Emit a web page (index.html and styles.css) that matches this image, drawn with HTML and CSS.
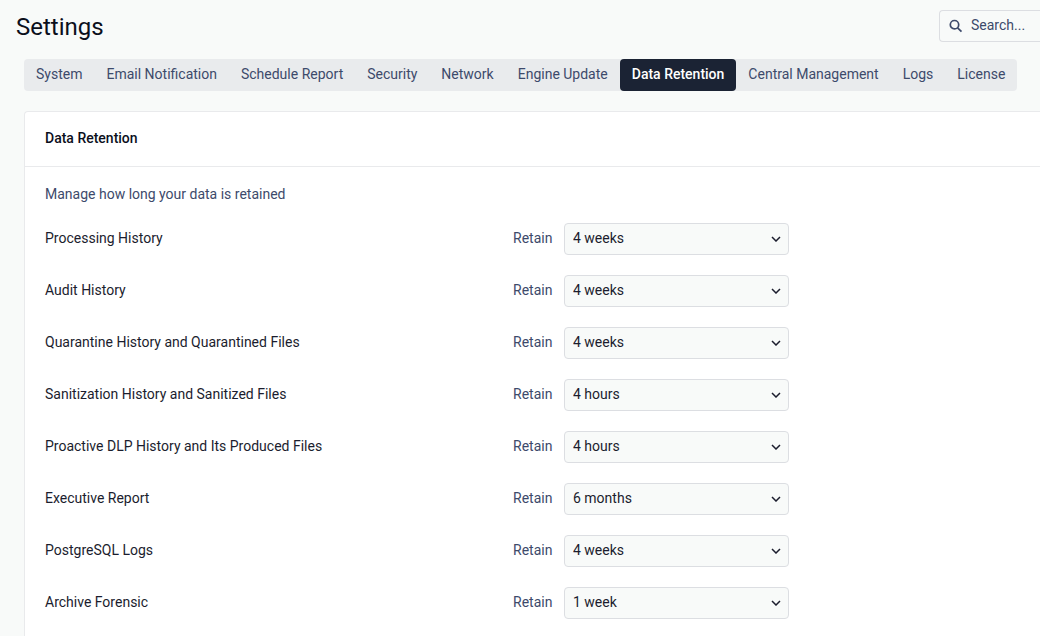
FILE: index.html
```html
<!DOCTYPE html>
<html lang="en">
	<head>
		<meta charset="utf-8">
		<meta name="viewport" content="width=device-width,initial-scale=1.0">
		<title>Settings</title>
		<link rel="stylesheet" href="styles.css">
	</head>
	<body>
		<header class="header">
			<h1 class="title">Settings</h1>
			<label class="search">
				<svg class="search-icon" viewBox="0 0 14 14" aria-hidden="true"><circle cx="5.5" cy="5.7" r="4.2"/><path d="M8.6 8.8L12.5 12.7"/></svg>
				<input class="search-input" type="text" placeholder="Search..." aria-label="Search">
			</label>
		</header>
		<nav class="tabs">
			<a class="tab" href="#">System</a>
			<a class="tab" href="#">Email Notification</a>
			<a class="tab" href="#">Schedule Report</a>
			<a class="tab" href="#">Security</a>
			<a class="tab" href="#">Network</a>
			<a class="tab" href="#">Engine Update</a>
			<a class="tab active" href="#">Data Retention</a>
			<a class="tab" href="#">Central Management</a>
			<a class="tab" href="#">Logs</a>
			<a class="tab" href="#">License</a>
		</nav>
		<main class="card">
			<h2 class="card-title">Data Retention</h2>
			<form class="card-body">
				<p class="hint">Manage how long your data is retained</p>
				<div class="row">
					<label class="name" for="processing">Processing History</label>
					<span class="retain">Retain</span>
					<div class="select">
						<select id="processing"><option>4 hours</option><option>1 week</option><option selected>4 weeks</option><option>6 months</option></select>
						<svg class="arrow" viewBox="0 0 10 6" aria-hidden="true"><path d="M1 1L5 5L9 1"/></svg>
					</div>
				</div>
				<div class="row">
					<label class="name" for="audit">Audit History</label>
					<span class="retain">Retain</span>
					<div class="select">
						<select id="audit"><option>4 hours</option><option>1 week</option><option selected>4 weeks</option><option>6 months</option></select>
						<svg class="arrow" viewBox="0 0 10 6" aria-hidden="true"><path d="M1 1L5 5L9 1"/></svg>
					</div>
				</div>
				<div class="row">
					<label class="name" for="quarantine">Quarantine History and Quarantined Files</label>
					<span class="retain">Retain</span>
					<div class="select">
						<select id="quarantine"><option>4 hours</option><option>1 week</option><option selected>4 weeks</option><option>6 months</option></select>
						<svg class="arrow" viewBox="0 0 10 6" aria-hidden="true"><path d="M1 1L5 5L9 1"/></svg>
					</div>
				</div>
				<div class="row">
					<label class="name" for="sanitization">Sanitization History and Sanitized Files</label>
					<span class="retain">Retain</span>
					<div class="select">
						<select id="sanitization"><option selected>4 hours</option><option>1 week</option><option>4 weeks</option><option>6 months</option></select>
						<svg class="arrow" viewBox="0 0 10 6" aria-hidden="true"><path d="M1 1L5 5L9 1"/></svg>
					</div>
				</div>
				<div class="row">
					<label class="name" for="dlp">Proactive DLP History and Its Produced Files</label>
					<span class="retain">Retain</span>
					<div class="select">
						<select id="dlp"><option selected>4 hours</option><option>1 week</option><option>4 weeks</option><option>6 months</option></select>
						<svg class="arrow" viewBox="0 0 10 6" aria-hidden="true"><path d="M1 1L5 5L9 1"/></svg>
					</div>
				</div>
				<div class="row">
					<label class="name" for="executive">Executive Report</label>
					<span class="retain">Retain</span>
					<div class="select">
						<select id="executive"><option>4 hours</option><option>1 week</option><option>4 weeks</option><option selected>6 months</option></select>
						<svg class="arrow" viewBox="0 0 10 6" aria-hidden="true"><path d="M1 1L5 5L9 1"/></svg>
					</div>
				</div>
				<div class="row">
					<label class="name" for="postgresql">PostgreSQL Logs</label>
					<span class="retain">Retain</span>
					<div class="select">
						<select id="postgresql"><option>4 hours</option><option>1 week</option><option selected>4 weeks</option><option>6 months</option></select>
						<svg class="arrow" viewBox="0 0 10 6" aria-hidden="true"><path d="M1 1L5 5L9 1"/></svg>
					</div>
				</div>
				<div class="row">
					<label class="name" for="forensic">Archive Forensic</label>
					<span class="retain">Retain</span>
					<div class="select">
						<select id="forensic"><option>4 hours</option><option selected>1 week</option><option>4 weeks</option><option>6 months</option></select>
						<svg class="arrow" viewBox="0 0 10 6" aria-hidden="true"><path d="M1 1L5 5L9 1"/></svg>
					</div>
				</div>
			</form>
		</main>
	</body>
</html>
```
FILE: styles.css
```css
*{
	margin: 0;
	padding: 0;
	box-sizing: border-box;
}
body{
	min-height: 100vh;
	display: flex;
	flex-direction: column;
	background-color: #f8faf9;
	color: #1b1d2e;
	font: 14px/20px Roboto, "Liberation Sans", sans-serif;
}
.header{
	display: flex;
	align-items: flex-start;
	justify-content: space-between;
	padding: 10px 0 0 16px;
}
.title{
	padding-top: 1px;
	font-size: 24px;
	line-height: 32px;
	font-weight: 400;
	color: #0b0f1c;
}
.search{
	width: 101px;
	height: 32px;
	display: flex;
	align-items: center;
	gap: 8px;
	padding-left: 9px;
	border: 1px solid #dcdee2;
	border-right: 0;
	border-radius: 4px 0 0 4px;
}
.search-icon{
	width: 14px;
	height: 14px;
	flex: none;
	fill: none;
	stroke: #3d4a6b;
	stroke-width: 1.7;
}
.search-input{
	min-width: 0;
	flex: 1;
	padding-bottom: 2px;
	border: 0;
	outline: 0;
	background: none;
	font: inherit;
	color: #3d4a6b;
}
.search-input::placeholder{
	color: #3d4a6b;
}
.tabs{
	align-self: flex-start;
	display: flex;
	margin: 16px 24px 20px;
	border-radius: 4px;
	background-color: #e9ebed;
}
.tab{
	padding: 5px 12px 7px;
	border-radius: 4px;
	color: #3d4a6b;
	text-decoration: none;
	white-space: nowrap;
}
.active{
	background-color: #1b2334;
	color: #fff;
	font-weight: 500;
}
.card{
	flex: 1;
	margin-left: 24px;
	border: 1px solid #e9eaec;
	border-width: 1px 0 0 1px;
	border-radius: 4px 0 0 0;
	background-color: #fff;
}
.card-title{
	padding: 16px 20px 18px;
	border-bottom: 1px solid #e9eaec;
	font-size: 14px;
	font-weight: 500;
	color: #0b0f1c;
}
.card-body{
	padding: 17px 20px 0;
}
.hint{
	margin-bottom: 19px;
	color: #3d4a6b;
}
.row{
	display: grid;
	grid-template-columns: minmax(0, 468px) 51px 225px;
}
.row + .row{
	margin-top: 20px;
}
.name, .retain{
	padding: 5px 0 7px;
}
.retain{
	color: #3d4a6b;
}
.select{
	position: relative;
}
.select select{
	width: 100%;
	height: 32px;
	padding: 0 32px 2px 8px;
	border: 1px solid #dcdee2;
	border-radius: 4px;
	background-color: #f8faf9;
	color: #1b1d2e;
	font: inherit;
	appearance: none;
}
.arrow{
	width: 10px;
	height: 6px;
	position: absolute;
	top: 13px;
	right: 8px;
	fill: none;
	stroke: #1b1d2e;
	stroke-width: 1.5;
	pointer-events: none;
}
```
